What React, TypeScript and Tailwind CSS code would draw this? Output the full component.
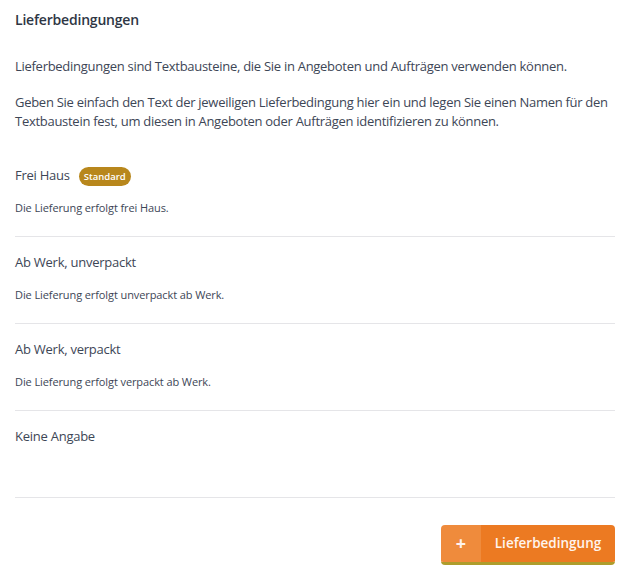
import React from "react";

const items = [
  { name: "Frei Haus", desc: "Die Lieferung erfolgt frei Haus.", standard: true },
  { name: "Ab Werk, unverpackt", desc: "Die Lieferung erfolgt unverpackt ab Werk." },
  { name: "Ab Werk, verpackt", desc: "Die Lieferung erfolgt verpackt ab Werk." },
  { name: "Keine Angabe", desc: "" },
];

export default function App() {
  return (
    <div
      className="w-[624px] h-[571px] bg-white text-[#3d4656] pl-[15px] pr-[9px] pt-[10px]"
      style={{ fontFamily: '"Open Sans", sans-serif' }}
    >
      <h1 className="text-[14px] font-semibold text-[#2e3644] leading-[20px] tracking-[-0.2px]">Lieferbedingungen</h1>
      <p className="mt-[27px] text-[13px] leading-[19px] tracking-[-0.28px]">
        Lieferbedingungen sind Textbausteine, die Sie in Angeboten und Aufträgen verwenden können.
      </p>
      <p className="mt-[17px] text-[13px] leading-[19px] tracking-[-0.28px]">
        Geben Sie einfach den Text der jeweiligen Lieferbedingung hier ein und legen Sie einen Namen für den Textbaustein fest, um diesen in Angeboten oder Aufträgen identifizieren zu können.
      </p>
      <div className="mt-[19px]">
        {items.map((it) => (
          <div key={it.name} className="border-b border-[#e5e5e8] h-[87px] pt-[16px]">
            <div className="flex items-center gap-[9px] h-[20px]">
              <span className="text-[13px] tracking-[-0.25px]">{it.name}</span>
              {it.standard && (
                <span className="bg-[#b8871c] text-white text-[9.5px] font-semibold rounded-full px-[5px] h-[19px] leading-[19px]">
                  Standard
                </span>
              )}
            </div>
            <p className="mt-[14px] text-[11px] leading-[16px] tracking-[-0.1px]">{it.desc}</p>
          </div>
        ))}
      </div>
      <div className="flex justify-end mt-[27px]">
        <button className="flex h-[40px] w-[174px] rounded-[4px] overflow-hidden border-b-[3px] border-[#ae9d2c] text-[#fff4ee]">
          <span className="w-[40px] bg-[#ef8b3c] flex items-center justify-center text-[18px] font-bold">+</span>
          <span className="flex-1 bg-[#ec7a22] flex items-center justify-center text-[13.5px] font-semibold">Lieferbedingung</span>
        </button>
      </div>
    </div>
  );
}
